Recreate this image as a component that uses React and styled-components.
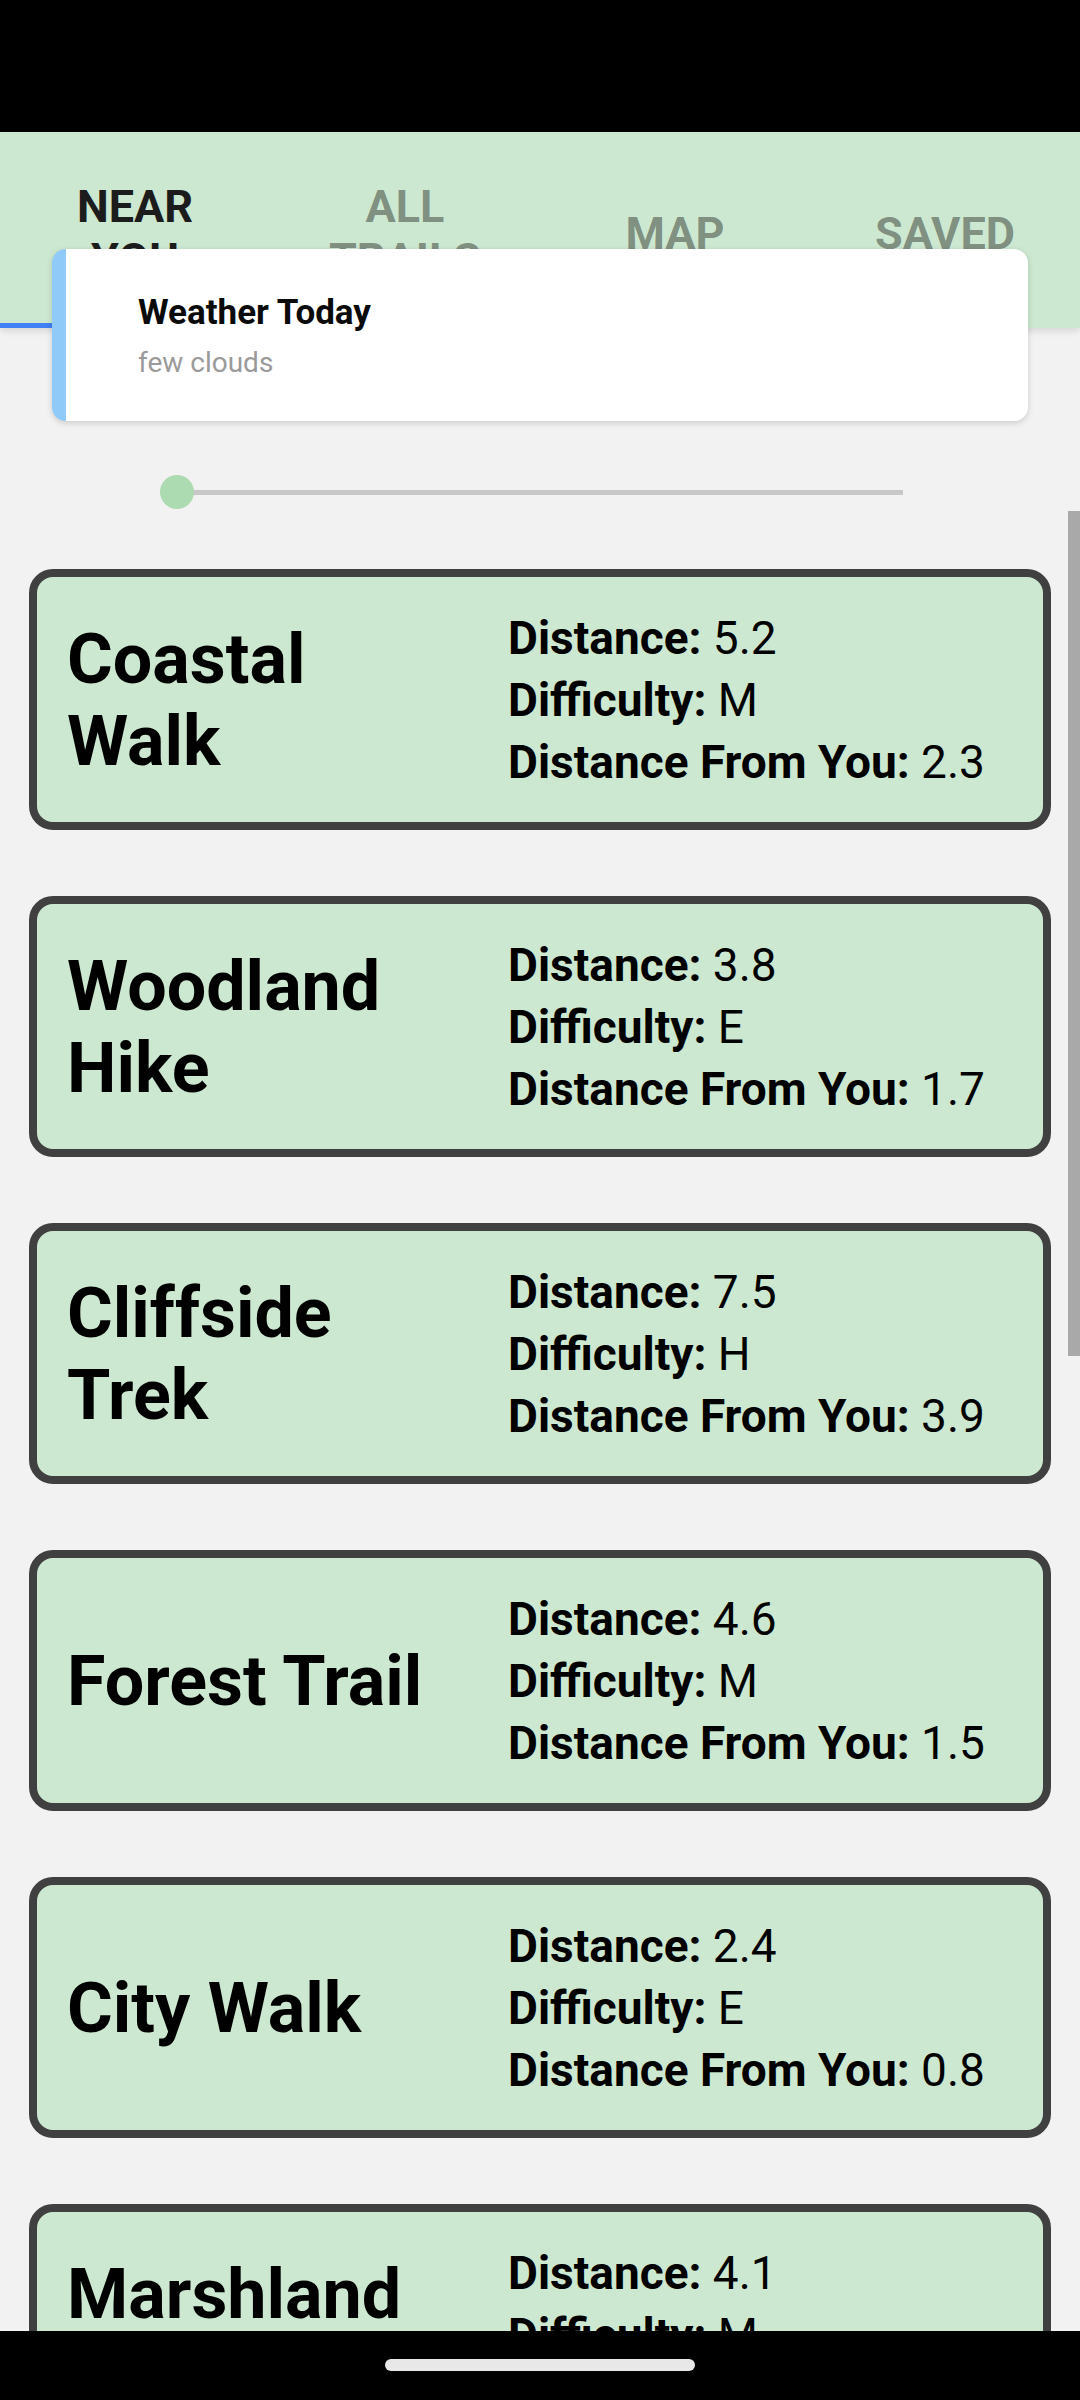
import React from "react";
import styled, { createGlobalStyle } from "styled-components";

const GlobalStyle = createGlobalStyle`
  * { box-sizing: border-box; }
  html, body { margin: 0; padding: 0; background: #f2f2f2; }
  body { font-family: Roboto, "Liberation Sans", Arial, sans-serif; }
`;

const Screen = styled.div`
  position: relative;
  width: 1080px;
  height: 2400px;
  overflow: hidden;
  background: #f2f2f2;
  font-family: Roboto, "Liberation Sans", Arial, sans-serif;
`;

const StatusBar = styled.div`
  height: 132px;
  background: #000;
`;

const TabBar = styled.div`
  position: relative;
  z-index: 1;
  display: flex;
  height: 196px;
  padding-top: 6px;
  background: #cde8d0;
  box-shadow: 0 2px 8px rgba(0, 0, 0, 0.14);
`;

const Tab = styled.div`
  flex: 1;
  display: flex;
  align-items: center;
  justify-content: center;
  padding: 0 36px;
  text-align: center;
  font-size: 45px;
  font-weight: 700;
  line-height: normal;
  text-transform: uppercase;
  color: ${(p) => (p.$active ? "#1c1c1c" : "rgba(0, 0, 0, 0.4)")};
  box-shadow: ${(p) => (p.$active ? "inset 0 -5px 0 #3f80f4" : "none")};
`;

const WeatherCard = styled.div`
  position: relative;
  z-index: 2;
  height: 172px;
  margin: -79px 52px 0;
  padding-left: 72px;
  display: flex;
  flex-direction: column;
  justify-content: center;
  gap: 13px;
  background: #fff;
  border-left: 14px solid #90caf9;
  border-radius: 14px;
  box-shadow: 0 2px 6px rgba(0, 0, 0, 0.16);
`;

const WeatherTitle = styled.div`
  font-size: 35px;
  font-weight: 700;
  color: #0a0a0a;
`;

const WeatherDesc = styled.div`
  font-size: 28px;
  font-weight: 400;
  color: #9a9a9a;
`;

const SliderRow = styled.div`
  padding: 69px 0 0 177px;
`;

const Track = styled.div`
  position: relative;
  width: 726px;
  height: 5px;
  background: #c8c8c8;
`;

const Thumb = styled.div`
  position: absolute;
  left: -17px;
  top: -15px;
  width: 34px;
  height: 34px;
  border-radius: 50%;
  background: #acdab1;
`;

const CardList = styled.div`
  display: flex;
  flex-direction: column;
  gap: 66px;
  padding: 74px 29px 0;
`;

const TrailCard = styled.div`
  height: 261px;
  display: grid;
  grid-template-columns: 400px 1fr;
  column-gap: 41px;
  align-items: center;
  padding-left: 30px;
  background: #cde8d0;
  border: 8px solid #404040;
  border-radius: 24px;
  flex-shrink: 0;
`;

const TrailName = styled.div`
  font-size: 70px;
  font-weight: 700;
  line-height: 82px;
  color: #000;
`;

const Details = styled.div`
  display: flex;
  flex-direction: column;
`;

const DetailLine = styled.div`
  font-size: 46px;
  line-height: 62px;
  color: #000;
  white-space: nowrap;
`;

const Label = styled.span`
  font-weight: 700;
`;

const ScrollIndicator = styled.div`
  position: absolute;
  right: 0;
  top: 511px;
  width: 12px;
  height: 845px;
  background: #a9a9a9;
`;

const NavBar = styled.div`
  position: absolute;
  left: 0;
  right: 0;
  bottom: 0;
  height: 69px;
  background: #000;
  display: flex;
  justify-content: center;
  padding-top: 28px;
`;

const HomePill = styled.div`
  width: 310px;
  height: 12px;
  border-radius: 6px;
  background: #e8e8e8;
`;

const tabs = ["Near You", "All Trails", "Map", "Saved"];

const trails = [
  { name: "Coastal Walk", distance: "5.2", difficulty: "M", from: "2.3" },
  { name: "Woodland Hike", distance: "3.8", difficulty: "E", from: "1.7" },
  { name: "Cliffside Trek", distance: "7.5", difficulty: "H", from: "3.9" },
  { name: "Forest Trail", distance: "4.6", difficulty: "M", from: "1.5" },
  { name: "City Walk", distance: "2.4", difficulty: "E", from: "0.8" },
  { name: "Marshland Path", distance: "4.1", difficulty: "M", from: "2.6" },
];

export default function App() {
  return (
    <Screen>
      <GlobalStyle />
      <StatusBar />
      <TabBar>
        {tabs.map((t, i) => (
          <Tab key={t} $active={i === 0}>
            {t}
          </Tab>
        ))}
      </TabBar>
      <WeatherCard>
        <WeatherTitle>Weather Today</WeatherTitle>
        <WeatherDesc>few clouds</WeatherDesc>
      </WeatherCard>
      <SliderRow>
        <Track>
          <Thumb />
        </Track>
      </SliderRow>
      <CardList>
        {trails.map((t) => (
          <TrailCard key={t.name}>
            <TrailName>{t.name}</TrailName>
            <Details>
              <DetailLine>
                <Label>Distance:</Label> {t.distance}
              </DetailLine>
              <DetailLine>
                <Label>Difficulty:</Label> {t.difficulty}
              </DetailLine>
              <DetailLine>
                <Label>Distance From You:</Label> {t.from}
              </DetailLine>
            </Details>
          </TrailCard>
        ))}
      </CardList>
      <ScrollIndicator />
      <NavBar>
        <HomePill />
      </NavBar>
    </Screen>
  );
}
